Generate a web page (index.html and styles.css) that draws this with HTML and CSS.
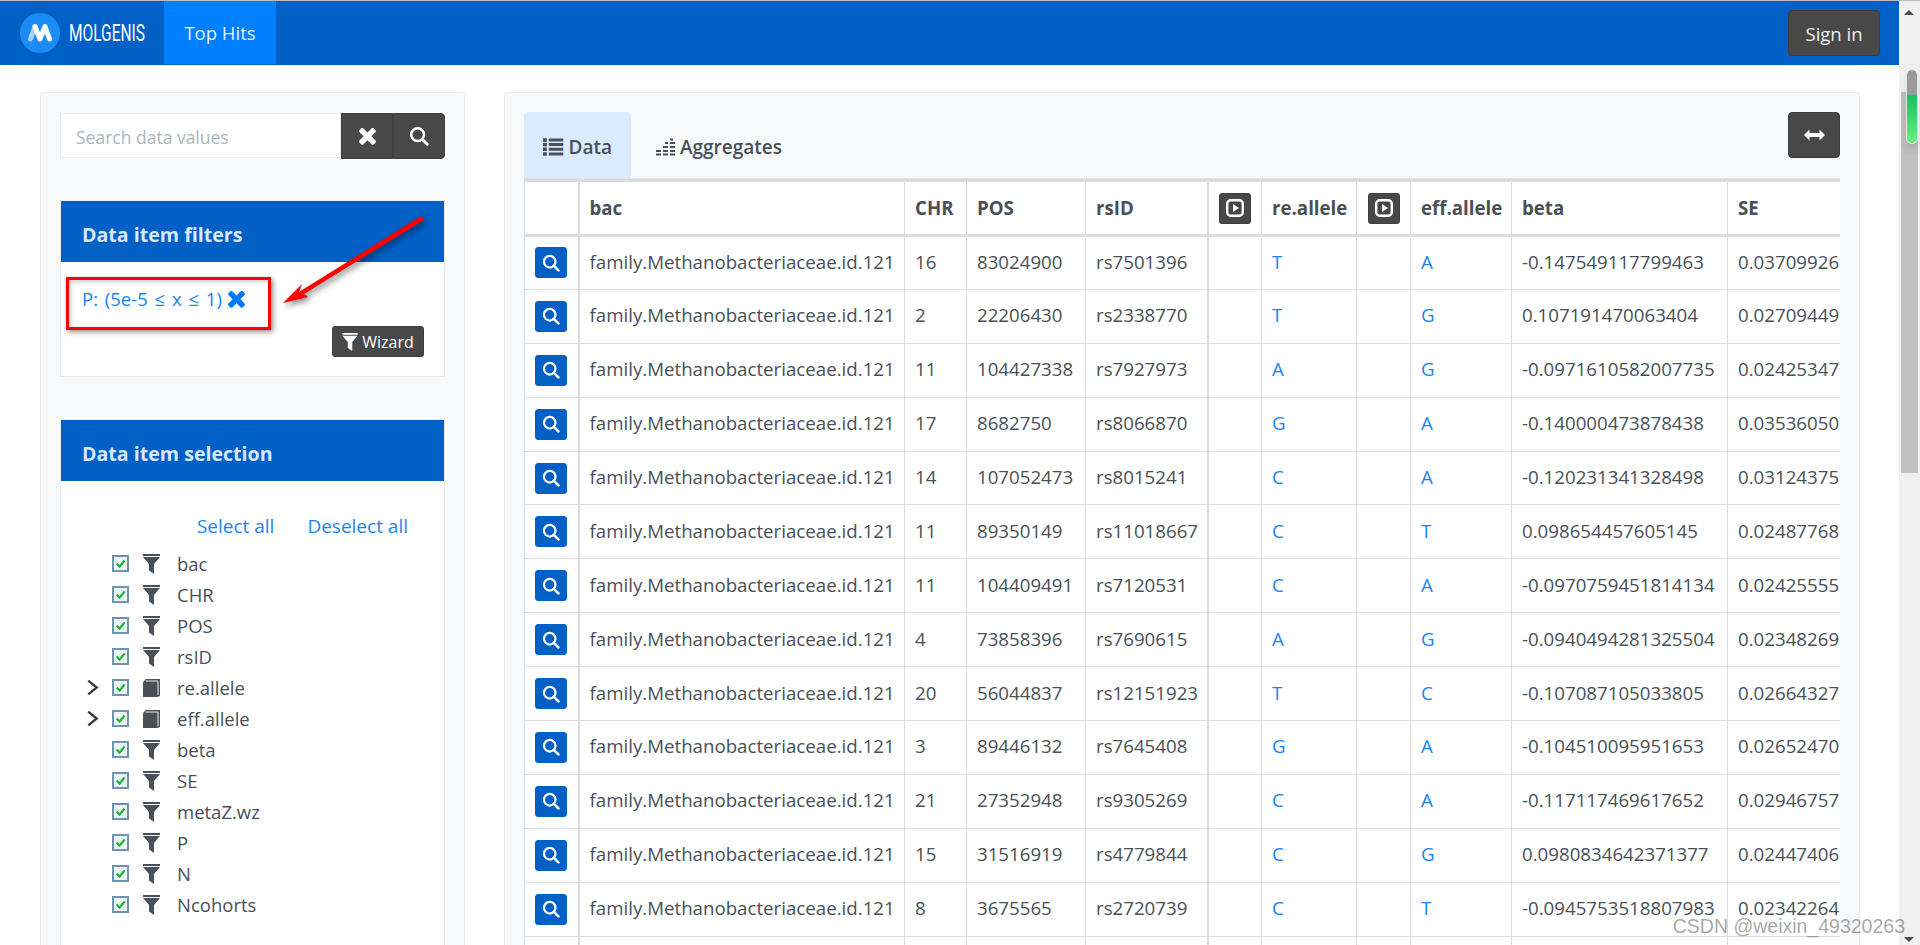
FILE: index.html
```html
<!DOCTYPE html>
<html lang="en">
<head>
<meta charset="utf-8">
<title>MOLGENIS Top Hits</title>
<link rel="stylesheet" href="styles.css">
</head>
<body>
<svg class="defs" aria-hidden="true">
  <symbol id="i-times" viewBox="110 300 1188 1188"><path d="M1298 1242q0 40-28 68l-136 136q-28 28-68 28t-68-28l-294-294-294 294q-28 28-68 28t-68-28l-136-136q-28-28-28-68t28-68l294-294-294-294q-28-28-28-68t28-68l136-136q28-28 68-28t68 28l294 294 294-294q28-28 68-28t68 28l136 136q28 28 28 68t-28 68l-294 294 294 294q28 28 28 68z" fill="currentColor"/></symbol>
  <symbol id="i-search" viewBox="0 0 20 20"><circle cx="8.6" cy="8.6" r="6.400" fill="none" stroke="currentColor" stroke-width="2.500"/><path d="M13.200 13.200l5 5" stroke="currentColor" stroke-width="3" stroke-linecap="round"/></symbol>
  <symbol id="i-funnel" viewBox="0 0 17 20"><path d="M0 0h17v2H0zM0 3h17l-6 7v10l-5-3.4V10z" fill="currentColor"/></symbol>
  <symbol id="i-book" viewBox="0 0 19 20"><path d="M0 3.500L3 0h16v19l-3 1H0z" fill="currentColor"/><path d="M3 2.200h13.800V18" fill="none" stroke="#fff" stroke-width="1"/></symbol>
  <symbol id="i-check" viewBox="0 0 17 17"><rect x="1" y="1" width="15" height="15" fill="#eef3f5" stroke="#6f94b0" stroke-width="2"/><path d="M4.600 8.500l3 3 5-6" fill="none" stroke="#1fb53a" stroke-width="2.200"/></symbol>
  <symbol id="i-play" viewBox="0 0 18 18"><rect x="1.200" y="1.200" width="15.600" height="15.600" rx="3.500" fill="none" stroke="currentColor" stroke-width="2.400"/><path d="M7 5l6 4-6 4z" fill="currentColor"/></symbol>
  <symbol id="i-list" viewBox="0 0 21 18"><path d="M0 0h4v3.600H0zM6 .4h15v3H6zM0 4.700h4v3.600H0zM6 5h15v3H6zM0 9.500h4v3.600H0zM6 9.800h15v3H6zM0 14.300h4V18H0zM6 14.600h15v3H6z" fill="currentColor"/></symbol>
  <symbol id="i-bars" viewBox="0 0 19 18"><path d="M0 12h5v2H0zM0 15.600h5v2H0zM7 8h5v2H7zM7 12h5v2H7zM7 15.600h5v2H7zM9 4h3v2H9zM14 .5h3v2h-3zM14 4h5v2h-5zM14 8h5v2h-5zM14 12h5v2h-5zM14 15.600h5v2h-5z" fill="currentColor"/></symbol>
  <symbol id="i-arrows" viewBox="0 0 21 12"><path d="M0 6l5.500-5.500V4h10V.5L21 6l-5.500 5.500V8h-10v3.500z" fill="currentColor"/></symbol>
</svg>

<div class="app">
  <div class="page">
    <header class="navbar">
      <a class="brand">
        <svg class="brand-mark" viewBox="0 0 40 40"><circle cx="20" cy="20" r="20" fill="#1b8cf5"/><path d="M10.500 26L15 13.500" fill="none" stroke="#a9d5fb" stroke-width="5" stroke-linecap="round"/><path d="M15 13.500L20 26 25 13.500 29.500 26" fill="none" stroke="#fff" stroke-width="5" stroke-linecap="round" stroke-linejoin="round"/></svg>
        <svg class="brand-name" viewBox="0 0 130 24"><text x="0" y="20" textLength="76" lengthAdjust="spacingAndGlyphs">MOLGENIS</text></svg>
      </a>
      <a class="nav-item">Top Hits</a>
      <button class="btn btn-signin">Sign in</button>
    </header>
    <div class="nav-shelf"></div>

    <div class="content">
      <aside class="sidebar">
        <div class="search">
          <input class="search-input" placeholder="Search data values">
          <button class="btn btn-search"><svg class="ico-times"><use href="#i-times"/></svg></button>
          <button class="btn btn-search btn-last"><svg class="ico-search"><use href="#i-search"/></svg></button>
        </div>

        <section class="panel panel-filters">
          <h2 class="panel-title">Data item filters</h2>
          <div class="panel-body">
            <a class="filter-tag"><span class="filter-text">P: (5e-5 ≤ x ≤ 1)</span><svg class="ico-tag-x"><use href="#i-times"/></svg></a>
            <button class="btn btn-wizard"><svg class="ico-wizard"><use href="#i-funnel"/></svg>Wizard</button>
          </div>
        </section>

        <section class="panel panel-select">
          <h2 class="panel-title">Data item selection</h2>
          <div class="select-links"><a>Select all</a><a>Deselect all</a></div>
          <ul class="tree">
            <li><svg class="chk"><use href="#i-check"/></svg><svg class="tico"><use href="#i-funnel"/></svg><span>bac</span></li>
            <li><svg class="chk"><use href="#i-check"/></svg><svg class="tico"><use href="#i-funnel"/></svg><span>CHR</span></li>
            <li><svg class="chk"><use href="#i-check"/></svg><svg class="tico"><use href="#i-funnel"/></svg><span>POS</span></li>
            <li><svg class="chk"><use href="#i-check"/></svg><svg class="tico"><use href="#i-funnel"/></svg><span>rsID</span></li>
            <li><svg class="chev" viewBox="0 0 12 16"><path d="M2 1.500L10 8l-8 6.500" fill="none" stroke="currentColor" stroke-width="2.200"/></svg><svg class="chk"><use href="#i-check"/></svg><svg class="tico"><use href="#i-book"/></svg><span>re.allele</span></li>
            <li><svg class="chev" viewBox="0 0 12 16"><path d="M2 1.500L10 8l-8 6.500" fill="none" stroke="currentColor" stroke-width="2.200"/></svg><svg class="chk"><use href="#i-check"/></svg><svg class="tico"><use href="#i-book"/></svg><span>eff.allele</span></li>
            <li><svg class="chk"><use href="#i-check"/></svg><svg class="tico"><use href="#i-funnel"/></svg><span>beta</span></li>
            <li><svg class="chk"><use href="#i-check"/></svg><svg class="tico"><use href="#i-funnel"/></svg><span>SE</span></li>
            <li><svg class="chk"><use href="#i-check"/></svg><svg class="tico"><use href="#i-funnel"/></svg><span>metaZ.wz</span></li>
            <li><svg class="chk"><use href="#i-check"/></svg><svg class="tico"><use href="#i-funnel"/></svg><span>P</span></li>
            <li><svg class="chk"><use href="#i-check"/></svg><svg class="tico"><use href="#i-funnel"/></svg><span>N</span></li>
            <li><svg class="chk"><use href="#i-check"/></svg><svg class="tico"><use href="#i-funnel"/></svg><span>Ncohorts</span></li>
          </ul>
        </section>
      </aside>

      <main class="results">
        <div class="tabs">
          <a class="tab tab-active"><svg class="ico-list"><use href="#i-list"/></svg>Data</a>
          <a class="tab"><svg class="ico-bars"><use href="#i-bars"/></svg>Aggregates</a>
          <button class="btn btn-expand"><svg class="ico-arrows"><use href="#i-arrows"/></svg></button>
        </div>
        <div class="table-wrap">
          <table class="grid">
            <colgroup><col class="c0"><col class="c1"><col class="c2"><col class="c3"><col class="c4"><col class="c5"><col class="c6"><col class="c5b"><col class="c6b"><col class="c7"><col class="c8"></colgroup>
            <thead><tr><th class="act"></th><th>bac</th><th>CHR</th><th>POS</th><th class="sep">rsID</th><th class="act"><button class="btn btn-play"><svg class="ico-play"><use href="#i-play"/></svg></button></th><th>re.allele</th><th class="act"><button class="btn btn-play"><svg class="ico-play"><use href="#i-play"/></svg></button></th><th>eff.allele</th><th>beta</th><th>SE</th></tr></thead>
            <tbody>
              <tr><td class="act"><button class="btn btn-row"><svg class="ico-row"><use href="#i-search"/></svg></button></td><td>family.Methanobacteriaceae.id.121</td><td>16</td><td>83024900</td><td class="sep">rs7501396</td><td></td><td class="lnk">T</td><td></td><td class="lnk">A</td><td>-0.147549117799463</td><td>0.03709926</td></tr>
              <tr><td class="act"><button class="btn btn-row"><svg class="ico-row"><use href="#i-search"/></svg></button></td><td>family.Methanobacteriaceae.id.121</td><td>2</td><td>22206430</td><td class="sep">rs2338770</td><td></td><td class="lnk">T</td><td></td><td class="lnk">G</td><td>0.107191470063404</td><td>0.02709449</td></tr>
              <tr><td class="act"><button class="btn btn-row"><svg class="ico-row"><use href="#i-search"/></svg></button></td><td>family.Methanobacteriaceae.id.121</td><td>11</td><td>104427338</td><td class="sep">rs7927973</td><td></td><td class="lnk">A</td><td></td><td class="lnk">G</td><td>-0.0971610582007735</td><td>0.02425347</td></tr>
              <tr><td class="act"><button class="btn btn-row"><svg class="ico-row"><use href="#i-search"/></svg></button></td><td>family.Methanobacteriaceae.id.121</td><td>17</td><td>8682750</td><td class="sep">rs8066870</td><td></td><td class="lnk">G</td><td></td><td class="lnk">A</td><td>-0.140000473878438</td><td>0.03536050</td></tr>
              <tr><td class="act"><button class="btn btn-row"><svg class="ico-row"><use href="#i-search"/></svg></button></td><td>family.Methanobacteriaceae.id.121</td><td>14</td><td>107052473</td><td class="sep">rs8015241</td><td></td><td class="lnk">C</td><td></td><td class="lnk">A</td><td>-0.120231341328498</td><td>0.03124375</td></tr>
              <tr><td class="act"><button class="btn btn-row"><svg class="ico-row"><use href="#i-search"/></svg></button></td><td>family.Methanobacteriaceae.id.121</td><td>11</td><td>89350149</td><td class="sep">rs11018667</td><td></td><td class="lnk">C</td><td></td><td class="lnk">T</td><td>0.098654457605145</td><td>0.02487768</td></tr>
              <tr><td class="act"><button class="btn btn-row"><svg class="ico-row"><use href="#i-search"/></svg></button></td><td>family.Methanobacteriaceae.id.121</td><td>11</td><td>104409491</td><td class="sep">rs7120531</td><td></td><td class="lnk">C</td><td></td><td class="lnk">A</td><td>-0.0970759451814134</td><td>0.02425555</td></tr>
              <tr><td class="act"><button class="btn btn-row"><svg class="ico-row"><use href="#i-search"/></svg></button></td><td>family.Methanobacteriaceae.id.121</td><td>4</td><td>73858396</td><td class="sep">rs7690615</td><td></td><td class="lnk">A</td><td></td><td class="lnk">G</td><td>-0.0940494281325504</td><td>0.02348269</td></tr>
              <tr><td class="act"><button class="btn btn-row"><svg class="ico-row"><use href="#i-search"/></svg></button></td><td>family.Methanobacteriaceae.id.121</td><td>20</td><td>56044837</td><td class="sep">rs12151923</td><td></td><td class="lnk">T</td><td></td><td class="lnk">C</td><td>-0.107087105033805</td><td>0.02664327</td></tr>
              <tr><td class="act"><button class="btn btn-row"><svg class="ico-row"><use href="#i-search"/></svg></button></td><td>family.Methanobacteriaceae.id.121</td><td>3</td><td>89446132</td><td class="sep">rs7645408</td><td></td><td class="lnk">G</td><td></td><td class="lnk">A</td><td>-0.104510095951653</td><td>0.02652470</td></tr>
              <tr><td class="act"><button class="btn btn-row"><svg class="ico-row"><use href="#i-search"/></svg></button></td><td>family.Methanobacteriaceae.id.121</td><td>21</td><td>27352948</td><td class="sep">rs9305269</td><td></td><td class="lnk">C</td><td></td><td class="lnk">A</td><td>-0.117117469617652</td><td>0.02946757</td></tr>
              <tr><td class="act"><button class="btn btn-row"><svg class="ico-row"><use href="#i-search"/></svg></button></td><td>family.Methanobacteriaceae.id.121</td><td>15</td><td>31516919</td><td class="sep">rs4779844</td><td></td><td class="lnk">C</td><td></td><td class="lnk">G</td><td>0.0980834642371377</td><td>0.02447406</td></tr>
              <tr><td class="act"><button class="btn btn-row"><svg class="ico-row"><use href="#i-search"/></svg></button></td><td>family.Methanobacteriaceae.id.121</td><td>8</td><td>3675565</td><td class="sep">rs2720739</td><td></td><td class="lnk">C</td><td></td><td class="lnk">T</td><td>-0.0945753518807983</td><td>0.02342264</td></tr>
              <tr><td class="act"></td><td></td><td></td><td></td><td class="sep"></td><td></td><td></td><td></td><td></td><td></td><td></td></tr>
            </tbody>
          </table>
        </div>
      </main>
    </div>
  </div>

  <div class="scrollbar">
    <span class="sb-up"></span>
    <span class="sb-track"></span>
    <span class="sb-thumb"></span>
    <span class="sb-down"></span>
  </div>

  <div class="mark-box"></div>
  <svg class="mark-arrow" viewBox="0 0 150 100"><path d="M3 88L22 69l-3 8L141 1l3 4L24 79l4 3z" fill="#f00"/></svg>
  <div class="watermark">CSDN @weixin_49320263</div>
</div>
</body>
</html>
```
FILE: styles.css
```css
* { box-sizing: border-box; }
html, body { margin: 0; height: 100%; overflow: hidden; background: #fff; }
body { font-family: "Open Sans", "Noto Sans", sans-serif; font-size: 16px; color: #495057; }
.defs { position: absolute; width: 0; height: 0; }
.app { display: flex; height: 945px; border-top: 1px solid #bdbdbd; position: relative; overflow: hidden; }
.page { width: 1899px; flex: none; }

.btn { border: 1px solid #3d3d3d; background: #484848; color: #fff; font: inherit; border-radius: 4px; padding: 0; display: inline-flex; align-items: center; justify-content: center; }

.navbar { height: 64px; background: #0060c6; display: flex; align-items: stretch; }
.nav-shelf { height: 1px; margin: 0 39px 0 40px; background: #e9ecef; }
.brand { display: flex; align-items: center; width: 164px; padding-left: 20px; }
.brand-mark { width: 40px; height: 40px; flex: none; }
.brand-name { width: 130px; height: 24px; margin-left: 9px; flex: none; margin-right: -55px; }
.brand-name text { font-family: "Roboto", sans-serif; font-size: 24px; font-weight: 400; fill: #fff; }
.nav-item { width: 112px; height: 63px; background: #007fff; color: #e3f0ff; font-size: 18.500px; display: flex; align-items: center; justify-content: center; position: relative; }
.btn-signin { width: 92px; height: 46px; margin: 9px 19px 0 auto; font-size: 18.500px; color: #f0f0f0; }

.content { display: flex; align-items: flex-start; gap: 39px; padding: 26px 39px 0 40px; }
.sidebar { width: 425px; height: 860px; flex: none; background: #f8f9fa; border: 1px solid #e9ecef; border-radius: 3px; padding: 20px 19px; }
.search { display: flex; height: 46px; }
.search-input { width: 281px; height: 45px; border: 1px solid #e9ecef; background: #fff; padding: 2px 15px 0; font: inherit; font-size: 17.500px; color: #495057; }
.search-input::placeholder { color: #adb5bd; opacity: 1; }
.btn-search { width: 52px; height: 46px; border-radius: 0; }
.btn-last { border-radius: 0 4px 4px 0; }
.ico-times { width: 17px; height: 17px; }
.ico-search { width: 20px; height: 20px; }

.panel { background: #fff; border: 1px solid #e9ecef; width: 385px; }
.panel-filters { height: 177px; margin-top: 41px; position: relative; }
.panel-select { margin-top: 42px; height: 560px; }
.panel-title { margin: 0; height: 61px; background: #0060c6; color: #d8e9ff; font-size: 19.600px; font-weight: 700; padding: 6px 0 0 21px; display: flex; align-items: center; }
.panel-body { display: flex; flex-direction: column; align-items: flex-start; padding: 25px 20px 0 21px; }
.filter-tag { color: #1a84f5; font-size: 18.500px; line-height: 24px; display: inline-flex; align-items: center; gap: 6px; }
.filter-text { word-spacing: 2px; }
.ico-tag-x { width: 17px; height: 17px; color: #007bff; }
.btn-wizard { height: 31px; width: 92px; align-self: flex-end; margin-top: 15px; font-size: 16px; gap: 4px; border-radius: 3px; }
.ico-wizard { width: 16px; height: 18px; }

.select-links { display: flex; justify-content: flex-end; gap: 33px; padding: 33px 36px 0 0; color: #1a84f5; font-size: 19px; line-height: 24px; }
.tree { list-style: none; margin: 10px 0 0; padding: 0 0 0 51px; }
.tree li { height: 31px; display: flex; align-items: center; position: relative; font-size: 18.500px; }
.chk { width: 17px; height: 17px; flex: none; }
.tico { width: 17px; height: 20px; margin-left: 14px; margin-right: 17px; color: #495057; flex: none; }
.chev { position: absolute; left: -26px; width: 13px; height: 17px; color: #343a40; }

.results { width: 1356px; height: 860px; flex: none; background: #f8f9fa; border: 1px solid #e9ecef; border-radius: 3px 3px 0 0; padding: 19px 19px 0; }
.tabs { display: flex; align-items: flex-start; height: 67px; border-bottom: 1px solid #dee2e6; }
.tab { height: 66px; display: flex; align-items: center; gap: 5px; padding: 4px 19px 0; font-size: 19px; font-weight: 600; color: #495057; border-radius: 4px 4px 0 0; }
.tab-active { background: #daebff; margin-right: 6px; width: 107px; }
.ico-list { width: 21px; height: 18px; }
.ico-bars { width: 19px; height: 18px; }
.btn-expand { width: 52px; height: 46px; margin-left: auto; }
.ico-arrows { width: 21px; height: 12px; }

.table-wrap { overflow: hidden; width: 1316px; }
.grid { border-collapse: collapse; table-layout: fixed; width: 1316px; background: #fff; font-size: 18.700px; }
.c0 { width: 54px; } .c1 { width: 326px; } .c2 { width: 62px; } .c3 { width: 119px; } .c4 { width: 122px; }
.c5 { width: 54px; } .c6 { width: 95px; } .c5b { width: 54px; } .c6b { width: 101px; } .c7 { width: 216px; } .c8 { width: 113px; }
.grid th, .grid td { border: 1px solid #dcdcdc; padding: 0 0 3px 10px; text-align: left; white-space: nowrap; overflow: hidden; }
.grid th { height: 55px; padding-bottom: 2px; border-top-width: 3px; border-bottom-width: 3px; font-weight: 700; }
.grid td { height: 53.900px; }
.grid .act { padding: 0; text-align: center; }
.grid .act:first-child { border-right-width: 2px; }
.grid .sep { border-right-width: 2px; }
.lnk { color: #1a84f5; }
.btn-row { width: 32px; height: 31px; background: #0060c6; border-color: #0060c6; border-radius: 3px; vertical-align: middle; }
.ico-row { width: 18px; height: 18px; }
.btn-play { width: 32px; height: 31px; vertical-align: middle; border-radius: 3px; }
.ico-play { width: 18px; height: 18px; }

.scrollbar { width: 21px; background: #f0f0f0; position: relative; flex: none; }
.sb-up { position: absolute; left: 5px; top: 9px; border: 5px solid transparent; border-top: 0; border-bottom: 5px solid #505050; }
.sb-down { position: absolute; left: 5px; bottom: 3px; border: 5px solid transparent; border-bottom: 0; border-top: 5px solid #505050; }
.sb-track { position: absolute; left: 2px; top: 91px; width: 17px; height: 381px; background: #c0c0c0; }
.sb-thumb { position: absolute; left: 8px; top: 69px; width: 10px; height: 73px; border-radius: 6px; background: linear-gradient(#9a9a9a 0 24px, #17c064 26px, #6cef7c 100%); box-shadow: 0 0 0 1px #e6e6e6, 0 6px 8px rgba(0,0,0,.15); }

.mark-box { position: absolute; left: 66px; top: 276px; width: 205px; height: 53px; border: 3px solid #f00; box-shadow: 2px 2px 5px rgba(0,0,0,.45), inset 2px 2px 4px rgba(0,0,0,.2); }
.mark-arrow { position: absolute; left: 280px; top: 214px; width: 150px; height: 100px; filter: drop-shadow(2px 3px 3px rgba(0,0,0,.5)); }
.watermark { position: absolute; right: 15px; bottom: 7px; font-family: "Liberation Sans", sans-serif; font-size: 19.500px; color: rgba(110,110,110,.6); white-space: nowrap; }
```
